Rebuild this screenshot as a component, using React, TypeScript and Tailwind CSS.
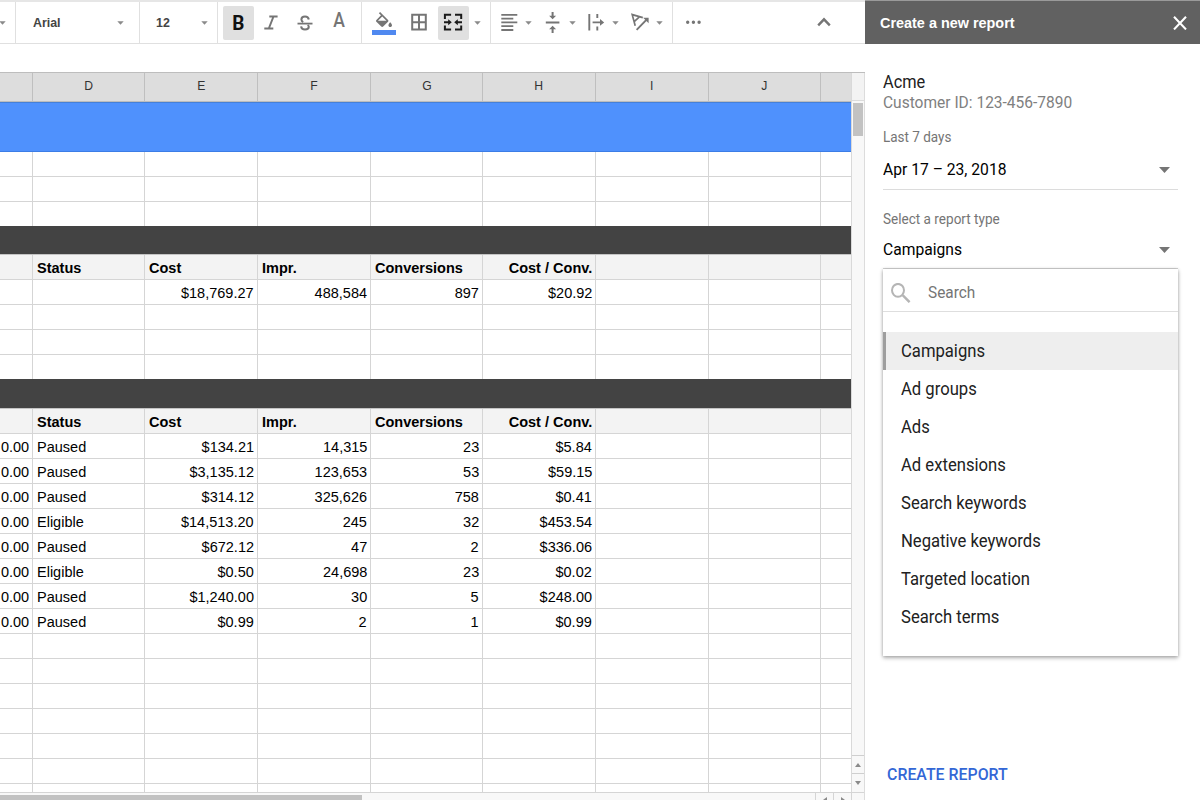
import React from 'react';

const COLUMNS = ['', 'D', 'E', 'F', 'G', 'H', 'I', 'J', ''];
const GRID = 'grid grid-cols-[33px_112px_113px_113px_112px_113px_113px_112px_30px]';

const HEADINGS = ['', 'Status', 'Cost', 'Impr.', 'Conversions', 'Cost / Conv.'];
const TOTALS = ['', '', '$18,769.27', '488,584', '897', '$20.92'];

const CAMPAIGNS = [
  ['0.00', 'Paused', '$134.21', '14,315', '23', '$5.84'],
  ['0.00', 'Paused', '$3,135.12', '123,653', '53', '$59.15'],
  ['0.00', 'Paused', '$314.12', '325,626', '758', '$0.41'],
  ['0.00', 'Eligible', '$14,513.20', '245', '32', '$453.54'],
  ['0.00', 'Paused', '$672.12', '47', '2', '$336.06'],
  ['0.00', 'Eligible', '$0.50', '24,698', '23', '$0.02'],
  ['0.00', 'Paused', '$1,240.00', '30', '5', '$248.00'],
  ['0.00', 'Paused', '$0.99', '2', '1', '$0.99'],
];

const REPORT_TYPES = [
  'Campaigns',
  'Ad groups',
  'Ads',
  'Ad extensions',
  'Search keywords',
  'Negative keywords',
  'Targeted location',
  'Search terms',
];

interface IconProps {
  children: React.ReactNode;
  className?: string;
}

const Icon: React.FC<IconProps> = ({ children, className = 'text-[#757575]' }) => (
  <svg className={`w-6 h-6 shrink-0 ${className}`} viewBox="0 0 24 24" fill="none" stroke="currentColor" strokeWidth={2}>
    {children}
  </svg>
);

const Caret: React.FC<{ className?: string }> = ({ className = '' }) => (
  <svg className={`w-[7px] h-1 shrink-0 ${className}`} viewBox="0 0 7 4" fill="#8a8a8a">
    <path d="M.3 .2h6.4L3.5 3.8z" />
  </svg>
);

const Toolbar: React.FC = () => (
  <div className="flex h-11 shrink-0 border-t-2 border-b border-t-[#e6e6e6] border-b-[#e0e0e0] bg-white text-[13.2px] font-bold text-[#444]">
    <div className="flex w-4 items-center border-r border-[#e0e0e0]">
      <Caret className="-ml-[1px]" />
    </div>
    <div className="flex w-[124px] items-center justify-between border-r border-[#e0e0e0] pl-[17px] pr-[15px]">
      <span className="origin-left scale-x-[0.94]">Arial</span>
      <Caret />
    </div>
    <div className="flex w-[78px] items-center justify-between border-r border-[#e0e0e0] pl-4 pr-[9px]">
      <span className="origin-left scale-x-[0.94]">12</span>
      <Caret />
    </div>

    <div className="flex w-[144px] items-center border-r border-[#e0e0e0] pl-[5px]">
      <button className="flex h-[34px] w-[31px] items-center justify-center rounded-xs bg-[#e0e0e0] pr-px font-[Roboto,sans-serif] text-[20px] text-[#111]">
        <span className="scale-x-95">B</span>
      </button>
      <Icon className="ml-[5px] text-[#757575]">
        <path d="M10.3 5.5h8.3M5.3 17.5h9M14.5 5.5L9.8 17.5" />
      </Icon>
      <Icon className="ml-[10px] text-[#757575]">
        <path d="M4.5 12.6h15" strokeWidth={1.8} />
        <path d="M15.8 8.5C15.5 6.5 14 5.5 12 5.5 9.8 5.5 8.4 6.7 8.4 8.5c0 1.3.7 2 1.8 2.6M14.6 14c.8.5 1.2 1 1.2 1.7 0 1.6-1.5 2.8-3.8 2.8-2.3 0-3.7-1.2-3.9-3.2" />
      </Icon>
      <span className="ml-[10px] flex h-[34px] w-6 scale-x-90 items-start justify-center pt-px font-[Roboto,sans-serif] text-[19.5px] leading-7 font-medium text-[#757575]">
        A
      </span>
    </div>

    <div className="flex w-[129px] items-center border-r border-[#e0e0e0] pl-[10px]">
      <div className="flex w-6 flex-col items-center gap-[3px] pt-0.5">
        <svg className="w-4 h-[15px]" viewBox="3 0 18 17" preserveAspectRatio="none" fill="#757575">
          <path d="M16.56 8.94L7.62 0 6.21 1.41l2.38 2.38-5.15 5.15c-.59.59-.59 1.54 0 2.12l5.5 5.5c.29.29.68.44 1.06.44s.77-.15 1.06-.44l5.5-5.5c.59-.58.59-1.53 0-2.12zM5.21 10L10 5.21 14.79 10H5.21zM19 11.5s-2 2.17-2 3.5c0 1.1.9 2 2 2s2-.9 2-2c0-1.33-2-3.5-2-3.5z" />
        </svg>
        <div className="h-[5px] w-6 bg-[#5089f0]" />
      </div>
      <Icon className="ml-[11px] text-[#757575]">
        <path d="M5.2 3.8h13.6v14.7H5.2zM12 3.8v14.7M5 11.2h14" />
      </Icon>
      <button className="ml-[7px] flex h-[34px] w-[31px] items-center justify-center rounded-xs bg-[#e0e0e0]">
        <Icon className="-ml-px text-[#1b1b1b]">
          <path d="M3.9 8V3.8h6.2M14 3.8h6.2V8M3.9 14.4v4.2h6.2M14 18.6h6.2v-4.2M3 11.2h5M21 11.2h-5" />
          <path d="M7.2 8.2l3.6 3-3.6 3zM16.8 8.2l-3.6 3 3.6 3z" fill="currentColor" stroke="none" />
        </Icon>
      </button>
      <Caret className="ml-[5px]" />
    </div>

    <div className="flex w-[182px] items-center border-r border-[#e0e0e0] pl-1.5">
      <Icon>
        <path d="M4.3 3.8h16M4.3 7.6h12M4.3 11.4h16M4.3 15.2h12M4.3 19h12" strokeWidth={1.8} />
      </Icon>
      <Caret className="ml-1" />
      <Icon className="ml-2 text-[#757575]">
        <path d="M5.8 11.5h13.6M12.6 .9v5M12.6 22.1v-5" />
        <path d="M9.1 4.8h7l-3.5 3.4zM9.1 18.2h7l-3.5-3.4z" fill="currentColor" stroke="none" />
      </Icon>
      <Caret className="ml-[5px]" />
      <Icon className="ml-2 text-[#757575]">
        <path d="M5.3 3v16.6M13.3 3v4M13.3 15.6v4M8.6 11.4H17" strokeWidth={1.9} />
        <path d="M16 8l4.2 3.4-4.2 3.4z" fill="currentColor" stroke="none" />
      </Icon>
      <Caret className="ml-1" />
      <Icon className="ml-[9px] text-[#757575]">
        <path d="M7.2 14.8L4.2 3.6l10.6 3M11.4 5.8L6.2 10.6" strokeWidth={1.7} />
        <path d="M8.6 18.9L18.6 8.6" strokeWidth={1.9} />
        <path d="M15.2 6.8h5.4v5.4z" fill="currentColor" stroke="none" />
      </Icon>
      <Caret className="ml-1" />
    </div>

    <div className="flex flex-1 items-center justify-between pr-[29px] pl-2">
      <Icon>
        <path d="M6.7 11.3h.01M12.4 11.3h.01M18.1 11.3h.01" strokeWidth={3.4} strokeLinecap="round" />
      </Icon>
      <Icon>
        <path d="M6.2 14.3l5.8-6 5.8 6" strokeWidth={2.4} />
      </Icon>
    </div>
  </div>
);

interface RowProps {
  cells?: string[];
  variant?: 'plain' | 'heading';
  className?: string;
}

const Row: React.FC<RowProps> = ({ cells = [], variant = 'plain', className = 'h-[25px] border-b' }) => (
  <div className={`${GRID} shrink-0 border-[#d5d5d5] ${variant === 'heading' ? 'bg-[#f3f3f3] font-bold' : 'bg-white'} ${className}`}>
    {COLUMNS.map((_, i) => {
      const right = variant === 'heading' ? i === 5 : i !== 1;
      return (
        <div
          key={i}
          className={`flex items-center overflow-hidden pt-px pr-[3px] pl-[3.5px] whitespace-nowrap ${i < 8 ? 'border-r border-[#d5d5d5]' : ''} ${right ? 'justify-end' : ''}`}
        >
          <span className={`scale-x-[0.936] ${right ? 'origin-right' : 'origin-left'}`}>{cells[i]}</span>
        </div>
      );
    })}
  </div>
);

const Sheet: React.FC = () => (
  <div className="flex w-[851px] flex-col overflow-hidden text-[15.5px] leading-none text-black">
    <div className={`${GRID} h-[29px] shrink-0 border-b border-[#bdbdbd] bg-[#dddddd] text-[12.8px] text-[#333]`}>
      {COLUMNS.map((name, i) => (
        <div key={i} className={`flex items-center justify-center pb-px ${i < 8 ? 'border-r border-[#bfbfbf]' : ''}`}>
          <span className="scale-x-95">{name}</span>
        </div>
      ))}
    </div>
    <div className="h-[50px] shrink-0 border-y border-t-[#4580d8] border-b-[#3c7de6] bg-[#4f91fd]" />
    <Row />
    <Row />
    <Row className="h-6" />
    <div className="h-[29px] shrink-0 border-b border-[#c4c4c4] bg-[#434343]" />
    <Row cells={HEADINGS} variant="heading" />
    <Row cells={TOTALS} />
    <Row />
    <Row />
    <Row className="h-6" />
    <div className="h-[30px] shrink-0 border-b border-[#c4c4c4] bg-[#434343]" />
    <Row cells={HEADINGS} variant="heading" />
    {CAMPAIGNS.map((cells, i) => (
      <Row key={i} cells={cells} />
    ))}
    {[1, 2, 3, 4, 5, 6].map((i) => (
      <Row key={i} />
    ))}
    <Row className="h-[8px]" />
  </div>
);

const VerticalScrollbar: React.FC = () => (
  <div className="flex w-[13px] flex-col items-center border-l border-[#d9d9d9] bg-[#f8f8f8]">
    <div className="h-7 w-full border-b border-[#dcdcdc] bg-[#f3f3f3]" />
    <div className="mt-0.5 h-[33px] w-2.5 bg-[#c2c2c2]" />
    <div className="mt-auto flex h-[18px] w-full items-center justify-center border-t border-[#cfcfcf]">
      <svg className="h-1 w-1.5" viewBox="0 0 6 4" fill="#8a8a8a"><path d="M0 4h6L3 0z" /></svg>
    </div>
    <div className="flex h-[19px] w-full items-center justify-center border-t border-[#cfcfcf]">
      <svg className="h-1 w-1.5" viewBox="0 0 6 4" fill="#8a8a8a"><path d="M0 0h6L3 4z" /></svg>
    </div>
  </div>
);

const HorizontalScrollbar: React.FC = () => (
  <div className="flex h-2 shrink-0 overflow-hidden border-t border-[#d5d5d5] bg-[#f8f8f8]">
    <div className="mt-0.5 h-[5px] w-[362px] bg-[#c2c2c2]" />
    <div className="ml-auto flex w-[18px] justify-center border-l border-[#d5d5d5] pt-1">
      <svg className="h-1.5 w-1" viewBox="0 0 4 6" fill="#8a8a8a"><path d="M4 0v6L0 3z" /></svg>
    </div>
    <div className="flex w-[18px] justify-center border-l border-[#d5d5d5] pt-1">
      <svg className="h-1.5 w-1" viewBox="0 0 4 6" fill="#8a8a8a"><path d="M0 0v6l4-3z" /></svg>
    </div>
    <div className="w-[13px] border-l border-[#d5d5d5]" />
  </div>
);

const SelectCaret: React.FC = () => (
  <svg className="mr-2 h-1.5 w-[11px]" viewBox="0 0 11 6" fill="#757575">
    <path d="M0 0h11L5.5 6z" />
  </svg>
);

const ReportSidebar: React.FC = () => (
  <aside className="flex w-[335px] shrink-0 flex-col bg-white font-[Roboto,sans-serif]">
    <div className="flex h-11 shrink-0 items-center justify-between border-t border-[#9a9a9a] bg-[#616161] pr-[13px] pl-[15px] text-white">
      <h2 className="origin-left scale-x-[0.93] pt-px font-['Liberation_Sans',Arial,sans-serif] text-[15.5px] font-bold">Create a new report</h2>
      <svg className="h-3.5 w-3.5" viewBox="0 0 14 14" fill="none" stroke="currentColor" strokeWidth={2.1}>
        <path d="M1 .8l12 12.6M13 .8L1 13.4" />
      </svg>
    </div>

    <div className="flex flex-1 flex-col pt-7 pr-[22px] pl-[18px]">
      <p className="origin-left scale-x-[0.93] text-[17.6px] leading-5 text-[#212121]">Acme</p>
      <p className="origin-left scale-x-[0.93] text-[16.7px] leading-[22px] text-[#808080]">Customer ID: 123-456-7890</p>
      <p className="mt-[14px] origin-left scale-x-[0.93] text-[14.5px] leading-5 text-[#757575]">Last 7 days</p>
      <div className="flex h-[42px] items-center justify-between border-b border-[#dcdcdc] pt-[3px] text-black">
        <span className="origin-left scale-x-[0.91] text-[17.2px]">Apr 17 – 23, 2018</span>
        <SelectCaret />
      </div>

      <p className="mt-5 origin-left scale-x-[0.935] text-[14.5px] leading-5 text-[#757575]">Select a report type</p>
      <div className="flex h-[39px] items-center justify-between border-b border-[#d6d6d6] pt-0.5 text-black">
        <span className="origin-left scale-x-[0.91] text-[17.2px]">Campaigns</span>
        <SelectCaret />
      </div>

      <div className="h-[387px] bg-white shadow-[0_2px_4px_rgba(0,0,0,0.3),0_0_3px_rgba(0,0,0,0.18)]">
        <div className="flex h-[43px] items-center border-b border-[#dedede] pl-2">
          <svg className="mt-1.5 h-5 w-5" viewBox="0 0 20 20" fill="none" stroke="#b5b5b5">
            <ellipse cx="7" cy="7.3" rx="6" ry="6.4" strokeWidth={2} />
            <path d="M11.6 12.2l7 7" strokeWidth={2.4} />
          </svg>
          <span className="mt-[5px] ml-[17px] origin-left scale-x-[0.91] text-[16.9px] text-[#757575]">Search</span>
        </div>
        <ul className="pt-5">
          {REPORT_TYPES.map((type, i) => (
            <li
              key={type}
              className={`flex h-[38px] items-center border-l-[3px] pl-[15px] text-[18.2px] text-[#212121] ${i === 0 ? 'border-[#9e9e9e] bg-[#eeeeee]' : 'border-transparent'}`}
            >
              <span className="origin-left scale-x-[0.915]">{type}</span>
            </li>
          ))}
        </ul>
      </div>

      <button className="mt-auto mb-4 ml-1 origin-left scale-x-[0.935] self-start text-[17px] leading-5 font-medium text-[#3367d6]">
        CREATE REPORT
      </button>
    </div>
  </aside>
);

const App: React.FC = () => {
  return (
    <div className="flex h-[800px] w-[1200px] overflow-hidden bg-white font-['Liberation_Sans',Arial,sans-serif]">
      <main className="flex w-[865px] shrink-0 flex-col">
        <Toolbar />
        <div className="h-[29px] shrink-0 border-b border-[#bdbdbd] bg-white" />
        <div className="flex min-h-0 flex-1 flex-col border-r border-[#dcdcdc]">
          <div className="flex min-h-0 flex-1">
            <Sheet />
            <VerticalScrollbar />
          </div>
          <HorizontalScrollbar />
        </div>
      </main>
      <ReportSidebar />
    </div>
  );
};

export default App;
